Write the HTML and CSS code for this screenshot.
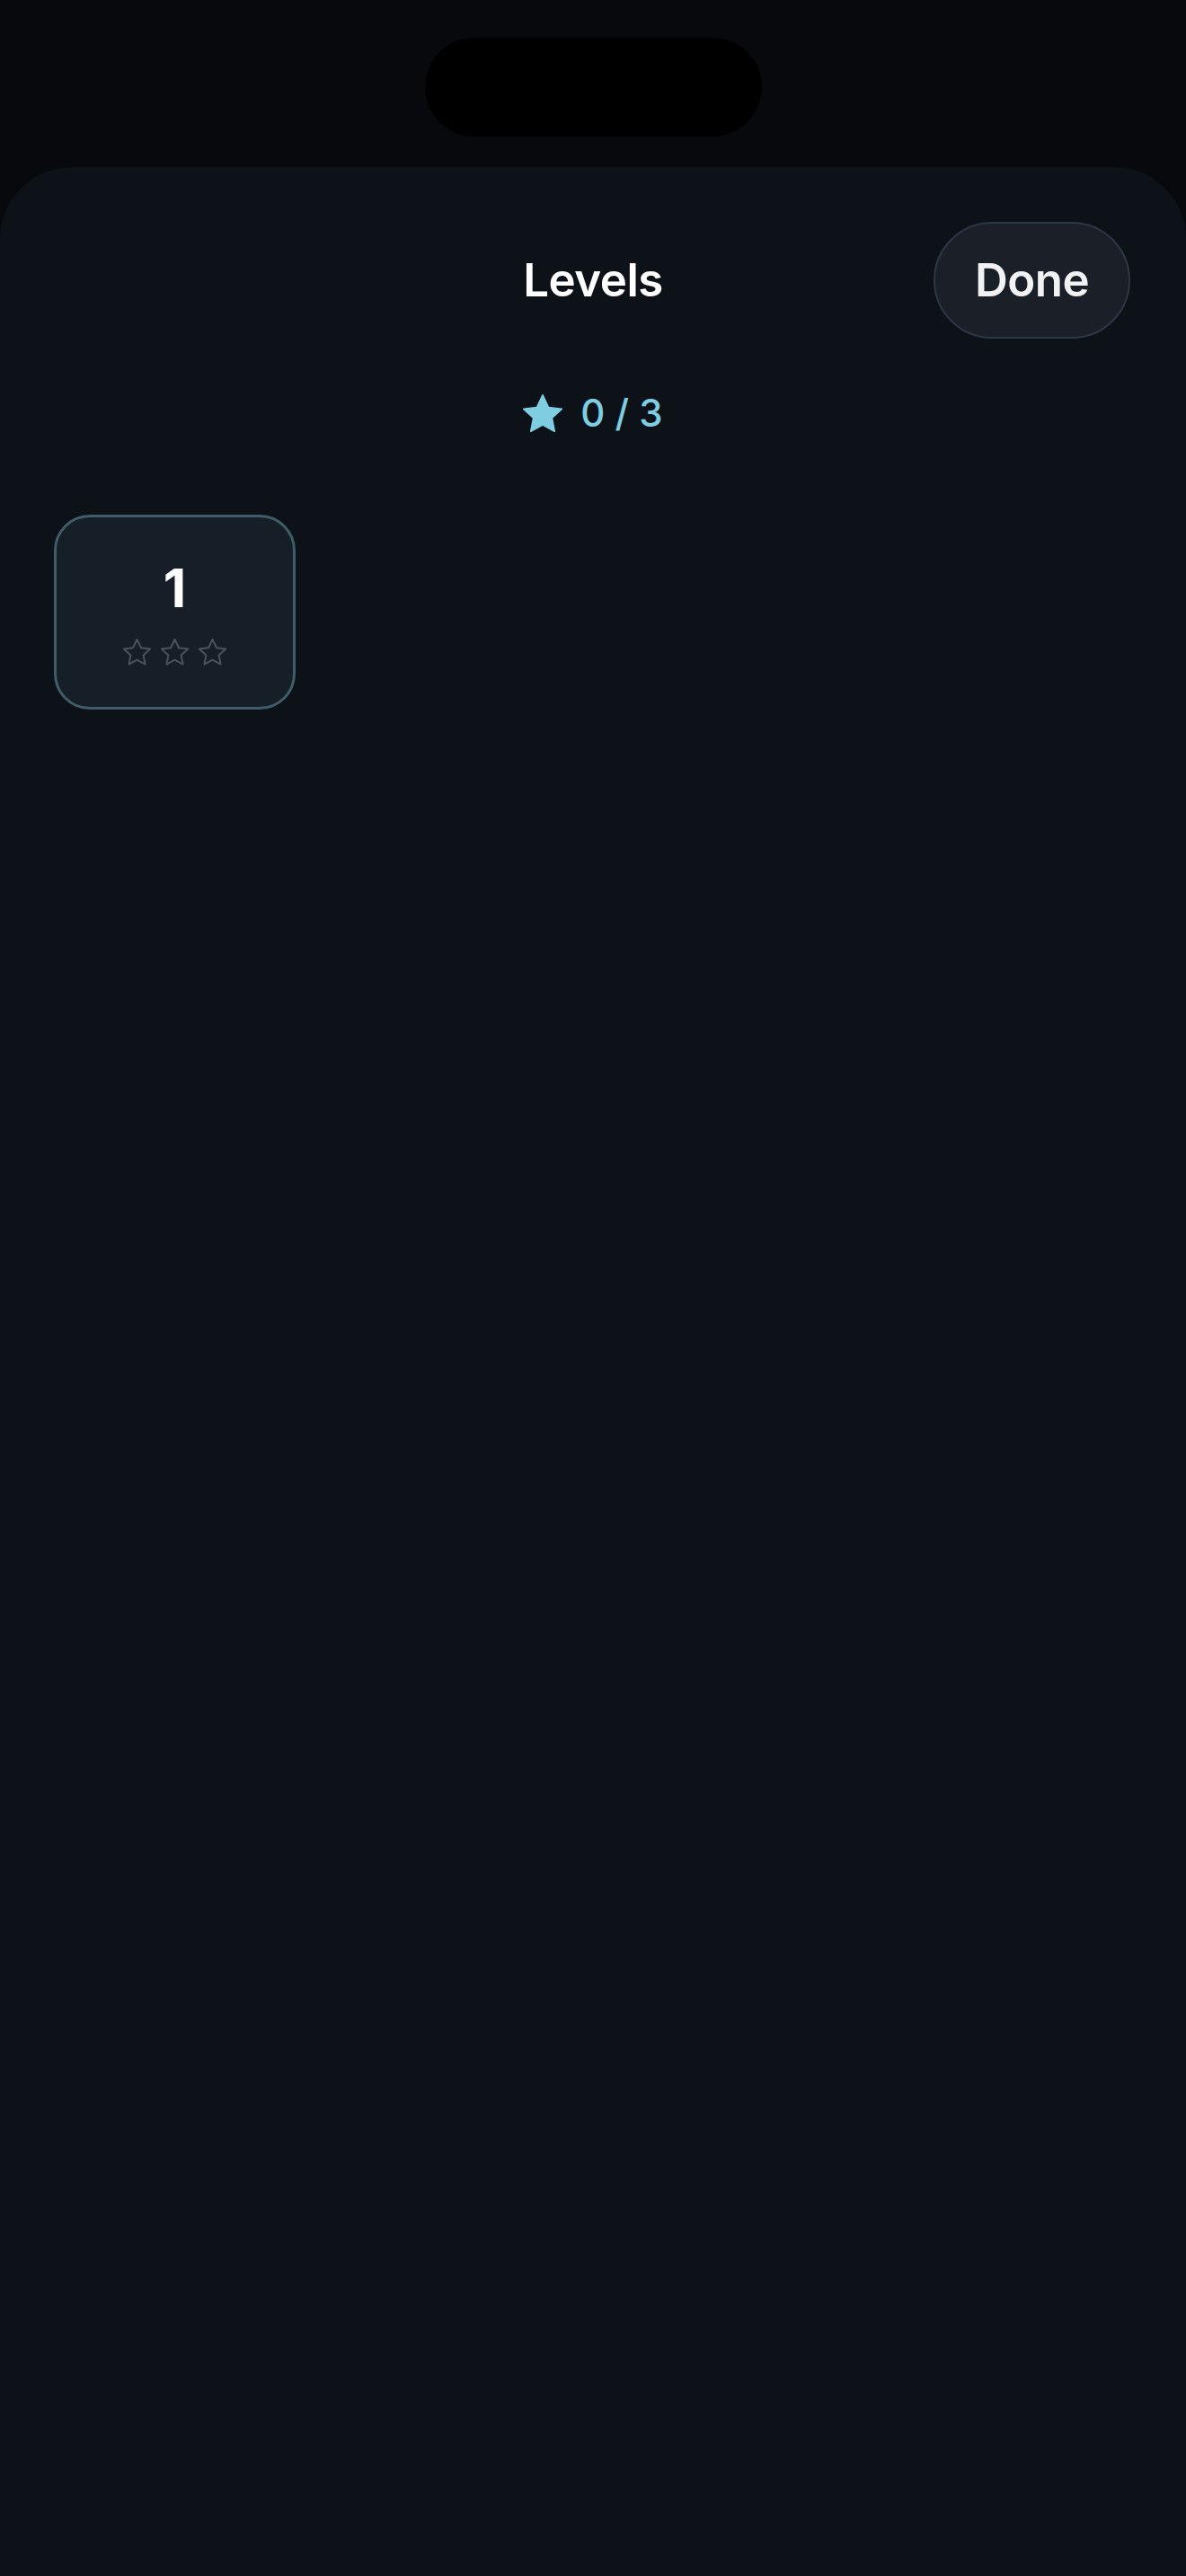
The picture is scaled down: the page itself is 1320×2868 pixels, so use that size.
FILE: index.html
```html
<!DOCTYPE html>
<html lang="en">

<head>
    <meta charset="UTF-8">
    <meta name="viewport" content="width=device-width, initial-scale=1.0">
    <title>Levels</title>
    <link rel="stylesheet" href="styles.css">
</head>

<body>

    <div class="status">
        <div class="island"></div>
    </div>

    <div class="sheet">
        <div class="header">
            <span></span>
            <h1>Levels</h1>
            <button class="done">Done</button>
        </div>

        <div class="total">
            <svg class="total-star" viewBox="2.2 2.1 19.6 18.8" width="44" height="42">
                <path d="M12 2.5l2.9 6.1 6.6.8-4.9 4.5 1.3 6.6L12 17.3l-5.9 3.2 1.3-6.6-4.9-4.5 6.6-.8z" />
            </svg>
            <span>0 / 3</span>
        </div>

        <div class="grid">
            <div class="level">
                <div class="level-num">1</div>
                <div class="level-stars">
                    <svg viewBox="0 0 24 24" width="37" height="37"><path d="M12 2.5l2.9 6.1 6.6.8-4.9 4.5 1.3 6.6L12 17.3l-5.9 3.2 1.3-6.6-4.9-4.5 6.6-.8z" /></svg>
                    <svg viewBox="0 0 24 24" width="37" height="37"><path d="M12 2.5l2.9 6.1 6.6.8-4.9 4.5 1.3 6.6L12 17.3l-5.9 3.2 1.3-6.6-4.9-4.5 6.6-.8z" /></svg>
                    <svg viewBox="0 0 24 24" width="37" height="37"><path d="M12 2.5l2.9 6.1 6.6.8-4.9 4.5 1.3 6.6L12 17.3l-5.9 3.2 1.3-6.6-4.9-4.5 6.6-.8z" /></svg>
                </div>
            </div>
        </div>
    </div>

</body>

</html>
```

FILE: styles.css
```css
* {
    padding: 0;
    margin: 0;
    box-sizing: border-box;
}

body {
    background-color: #08090c;
    font-family: Inter, "Noto Sans", sans-serif;
    color: #fff;
    height: 2868px;
    overflow: hidden;
}

.status {
    height: 186px;
    padding-top: 42px;
    display: flex;
    justify-content: center;
}

.island {
    width: 375px;
    height: 110px;
    border-radius: 55px;
    background-color: #000;
}

.sheet {
    background-color: #0d1118;
    border-radius: 80px 80px 0 0;
    height: 2682px;
    padding-top: 61px;
}

.header {
    display: grid;
    grid-template-columns: 1fr auto 1fr;
    align-items: center;
    padding: 0 62px;
}

h1 {
    font-size: 51px;
    font-weight: 600;
    line-height: 1.2;
    letter-spacing: -0.5px;
}

.done {
    justify-self: end;
    width: 219px;
    height: 130px;
    border-radius: 65px;
    background-color: #1a1f28;
    border: 2px solid #2d3747;
    color: #f2f2f4;
    font-family: inherit;
    font-size: 51px;
    font-weight: 600;
    letter-spacing: -0.5px;
    line-height: 1.2;
}

.total {
    margin-top: 58px;
    height: 50px;
    display: flex;
    justify-content: center;
    align-items: center;
    gap: 20px;
    color: #7fcde0;
    font-size: 42px;
    font-weight: 500;
    line-height: 50px;
}

.total-star path {
    fill: #7fcde0;
    stroke: #7fcde0;
    stroke-width: 0.8;
    stroke-linejoin: round;
}

.grid {
    margin-top: 88px;
    padding-left: 60px;
    display: flex;
}

.level {
    width: 269px;
    height: 217px;
    border: 3px solid #3f5d69;
    border-radius: 40px;
    background-color: #161f27;
    display: flex;
    flex-direction: column;
    align-items: center;
    padding-top: 44px;
}

.level-num {
    font-size: 59px;
    font-weight: 700;
    line-height: 70px;
}

.level-stars {
    margin-top: 18px;
    display: flex;
    gap: 5px;
}

.level-stars path {
    fill: none;
    stroke: #4a525c;
    stroke-width: 1.3;
    stroke-linejoin: round;
}
```
